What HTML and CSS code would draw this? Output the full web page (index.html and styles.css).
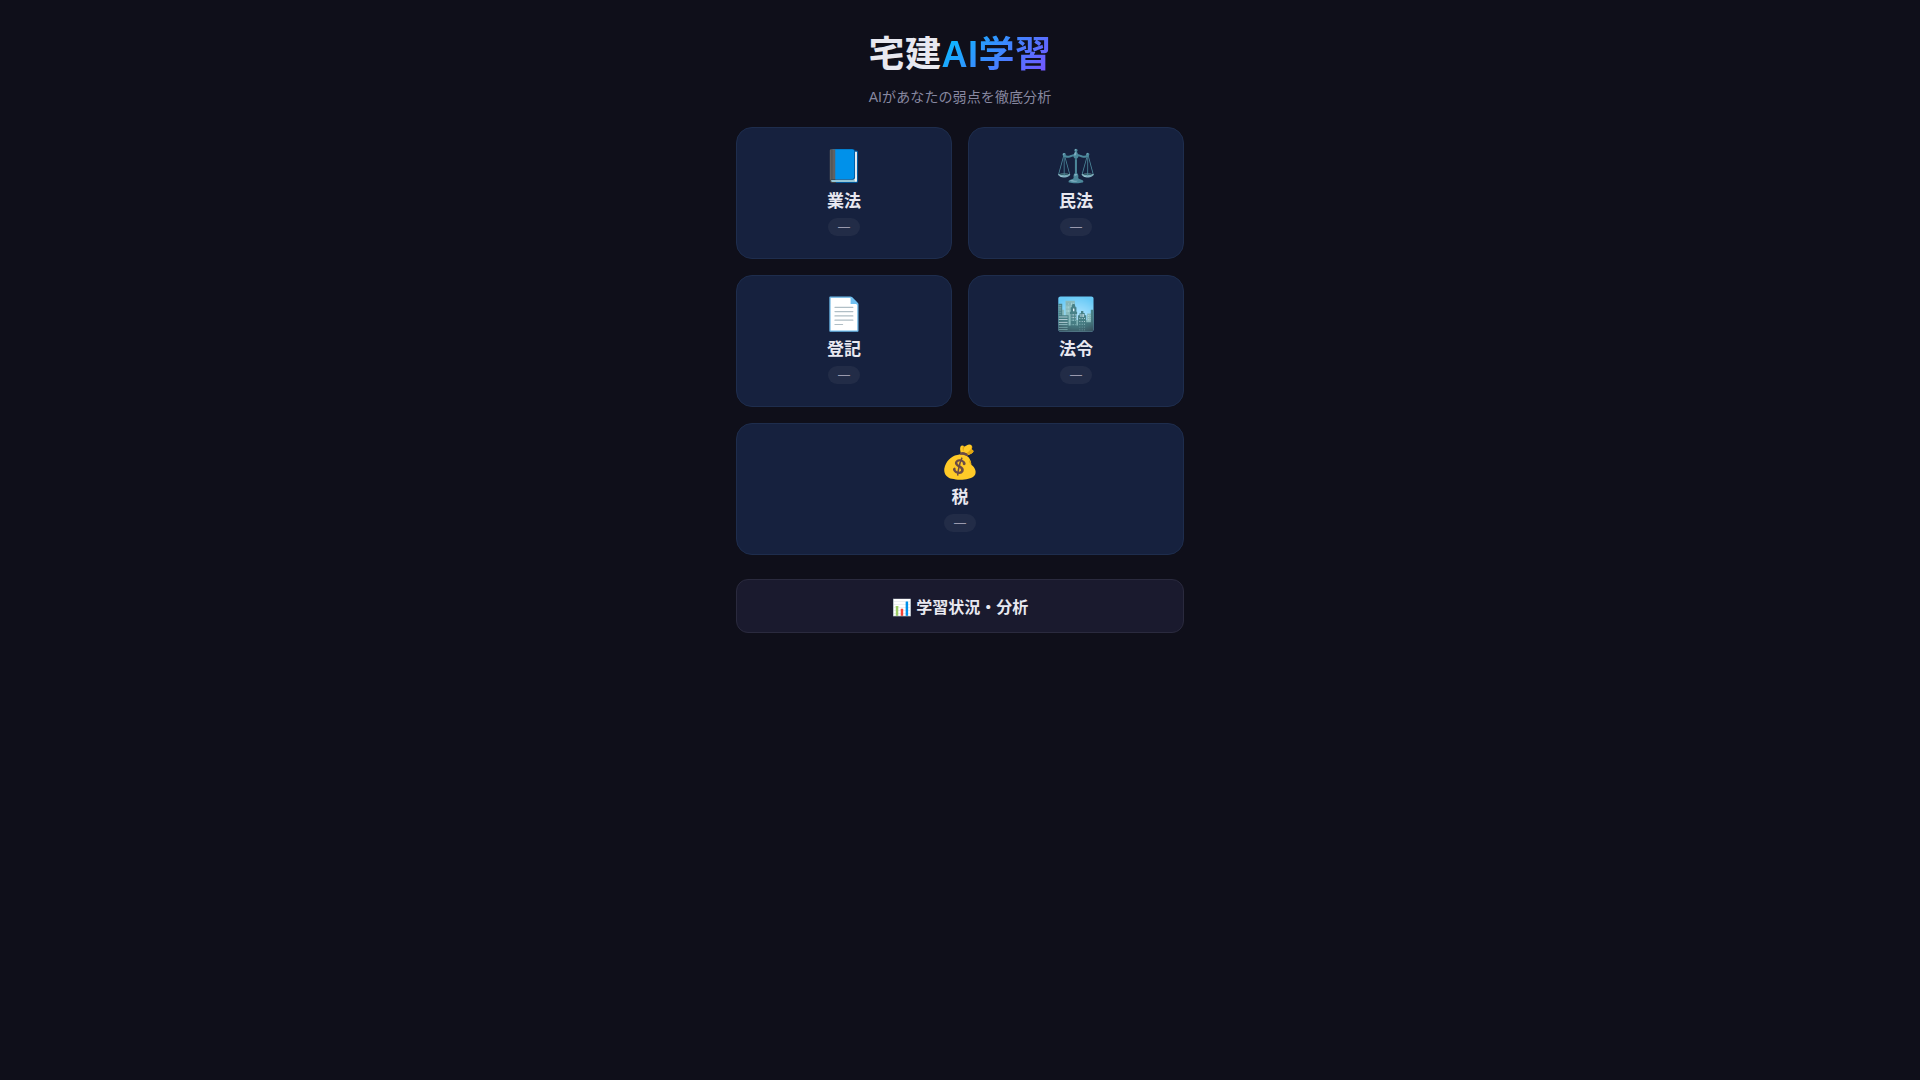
FILE: index.html
```html
<!DOCTYPE html>
<html lang="ja">
<head>
    <meta charset="UTF-8">
    <meta name="viewport" content="width=device-width, initial-scale=1.0">
    <title>宅建AI学習</title>
    <link rel="stylesheet" href="styles.css">
</head>
<body>
    <div class="container">
        <header class="header">
            <h1>宅建<span class="accent">AI学習</span></h1>
            <p class="subtitle">AIがあなたの弱点を徹底分析</p>
        </header>

        <div class="subject-grid">
            <button class="subject-card">
                <span class="subject-icon">📘</span>
                <span class="subject-name">業法</span>
                <span class="subject-badge">—</span>
            </button>
            <button class="subject-card">
                <span class="subject-icon">⚖️</span>
                <span class="subject-name">民法</span>
                <span class="subject-badge">—</span>
            </button>
            <button class="subject-card">
                <span class="subject-icon">📄</span>
                <span class="subject-name">登記</span>
                <span class="subject-badge">—</span>
            </button>
            <button class="subject-card">
                <span class="subject-icon">🏙️</span>
                <span class="subject-name">法令</span>
                <span class="subject-badge">—</span>
            </button>
            <button class="subject-card wide">
                <span class="subject-icon">💰</span>
                <span class="subject-name">税</span>
                <span class="subject-badge">—</span>
            </button>
        </div>

        <button class="stats-btn">📊 学習状況・分析</button>
    </div>
</body>
</html>
```

FILE: styles.css
```css
* {
    box-sizing: border-box;
    margin: 0;
    padding: 0;
}

body {
    font-family: "Liberation Sans", "Noto Sans CJK JP", sans-serif;
    background-color: #0f0f1a;
    color: #e8e8f0;
    min-height: 100vh;
}

button {
    font-family: inherit;
    color: inherit;
    cursor: pointer;
}

.container {
    max-width: 480px;
    margin: 0 auto;
    padding: 32px 16px;
}

.header {
    text-align: center;
    margin-bottom: 20px;
}

h1 {
    font-size: 36px;
    font-weight: 700;
    line-height: 46px;
    letter-spacing: 0.5px;
    margin-bottom: 9px;
}

.accent {
    background: linear-gradient(135deg, #00c2ff, #7c4dff);
    -webkit-background-clip: text;
    background-clip: text;
    color: transparent;
}

.subtitle {
    font-size: 14px;
    line-height: 20px;
    letter-spacing: 0.1px;
    color: #8888a0;
}

.subject-grid {
    display: grid;
    grid-template-columns: 1fr 1fr;
    gap: 16px;
    margin-bottom: 24px;
}

.subject-card {
    display: flex;
    flex-direction: column;
    align-items: center;
    padding: 19px 16px 22px;
    background-color: #16213e;
    border: 1px solid #1e2d4d;
    border-radius: 16px;
}

.subject-card.wide {
    grid-column: span 2;
}

.subject-icon {
    font-size: 32px;
    line-height: 38px;
    margin-bottom: 4px;
}

.subject-name {
    font-size: 17px;
    font-weight: 600;
    line-height: 25px;
    margin-bottom: 4px;
}

.subject-badge {
    min-width: 32px;
    padding: 2px 10px;
    font-size: 12px;
    line-height: 14px;
    color: #9a9aae;
    background-color: #222c47;
    border-radius: 20px;
}

.stats-btn {
    display: block;
    width: 100%;
    padding: 18px 16px 14px;
    font-size: 16px;
    font-weight: 600;
    line-height: 20px;
    background-color: #1a1a2e;
    border: 1px solid #2a2a3e;
    border-radius: 12px;
}
```
